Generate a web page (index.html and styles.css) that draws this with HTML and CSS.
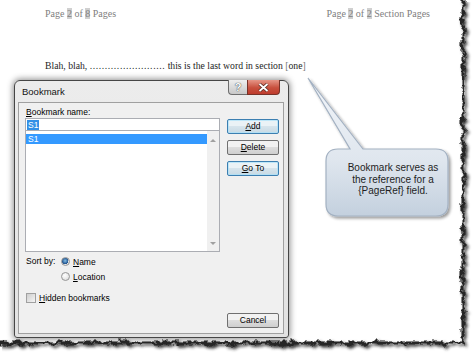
FILE: index.html
```html
<!DOCTYPE html>
<html>
  <head>
    <title>bookmark</title>
    <link rel="stylesheet" href="styles.css">
  </head>
  <body>
    <div class="page">

      <div class="header">
        <p class="header-text">Page <span class="fld">2</span> of <span class="fld">8</span> Pages</p>
        <p class="header-text">Page <span class="fld">2</span> of <span class="fld">2</span> Section Pages</p>
      </div>

      <p class="body-text">Blah, blah, <span class="leader">.........................</span> this is the last word in section <span class="mark">[</span>one<span class="mark">]</span></p>

      <div class="dialog">
        <div class="titlebar">
          <span class="title">Bookmark</span>
          <div class="caption-buttons">
            <span class="cap-btn help">?</span>
            <span class="cap-btn close">
              <svg width="11" height="9" viewBox="0 0 11 9">
                <path d="M1.5 1 L9.5 8 M9.5 1 L1.5 8" stroke="#5a2a22" stroke-width="3.4"/>
                <path d="M1.5 1 L9.5 8 M9.5 1 L1.5 8" stroke="#ffffff" stroke-width="1.8"/>
              </svg>
            </span>
          </div>
        </div>

        <div class="client">
          <div class="field-label"><u>B</u>ookmark name:</div>

          <div class="main">
            <div class="name-col">
              <div class="name-input"><span class="sel-text">S1</span></div>
              <div class="name-list">
                <div class="list-items">
                  <div class="item selected">S1</div>
                </div>
                <div class="scrollbar">
                  <span class="arrow up"></span>
                  <span class="arrow down"></span>
                </div>
              </div>
            </div>

            <div class="btn-col">
              <button class="btn default"><u>A</u>dd</button>
              <button class="btn"><u>D</u>elete</button>
              <button class="btn default"><u>G</u>o To</button>
            </div>
          </div>

          <div class="sort-row">
            <span class="sort-label">Sort by:</span>
            <div class="radios">
              <div class="option"><span class="radio checked"></span><span><u>N</u>ame</span></div>
              <div class="option"><span class="radio"></span><span><u>L</u>ocation</span></div>
            </div>
          </div>

          <div class="check-row"><span class="checkbox"></span><span><u>H</u>idden bookmarks</span></div>

          <div class="footer">
            <button class="btn">Cancel</button>
          </div>
        </div>
      </div>

      <div class="callout">
        <svg class="callout-shape" width="160" height="150" viewBox="0 0 160 150">
          <defs>
            <linearGradient id="calloutFill" x1="0" y1="0" x2="0" y2="1">
              <stop offset="0" stop-color="#f2f5f9"/>
              <stop offset="0.6" stop-color="#dfe6ee"/>
              <stop offset="1" stop-color="#c3d0de"/>
            </linearGradient>
            <filter id="calloutShadow" x="-20%" y="-20%" width="140%" height="140%">
              <feGaussianBlur in="SourceAlpha" stdDeviation="1.6"/>
              <feOffset dx="1.5" dy="2" result="s"/>
              <feComponentTransfer><feFuncA type="linear" slope="0.4"/></feComponentTransfer>
              <feMerge><feMergeNode/><feMergeNode in="SourceGraphic"/></feMerge>
            </filter>
          </defs>
          <path d="M38 77 L50 77 L8 6 L63 77 L136 77 Q148 77 148 89 L148 132 Q148 144 136 144 L38 144 Q26 144 26 132 L26 89 Q26 77 38 77 Z"
                fill="url(#calloutFill)" stroke="#a3b1c2" stroke-width="1.2" filter="url(#calloutShadow)"/>
        </svg>
        <p class="callout-text">Bookmark serves as<br>the reference for a<br>{PageRef} field.</p>
      </div>

      <svg class="torn-edge" width="474" height="355" viewBox="0 0 474 355">
        <defs>
          <filter id="torn" filterUnits="userSpaceOnUse" x="0" y="0" width="474" height="355">
            <feTurbulence type="fractalNoise" baseFrequency="0.14" numOctaves="4" seed="11" result="noise"/>
            <feDisplacementMap in="SourceGraphic" in2="noise" scale="8" xChannelSelector="R" yChannelSelector="G" result="d"/>
            <feGaussianBlur in="d" stdDeviation="1.5" result="b"/>
            <feOffset in="b" dx="2" dy="2" result="s"/>
            <feMerge><feMergeNode in="s"/><feMergeNode in="d"/></feMerge>
          </filter>
        </defs>
        <path d="M463 -10 L463 343 L-10 343" fill="none" stroke="#262626" stroke-width="3" filter="url(#torn)"/>
      </svg>

    </div>
  </body>
</html>
```

FILE: styles.css
```css
body {
  margin: 0;
  background-color: white;
}

.page {
  position: relative;
  width: 474px;
  height: 355px;
  overflow: hidden;
  padding: 8px 0 0 45px;
  box-sizing: border-box;
}

.header {
  display: flex;
  justify-content: space-between;
  width: 385px;
}

.header-text {
  margin: 0;
  font-family: "Liberation Serif", serif;
  font-size: 10px;
  line-height: 12px;
  color: rgb(128, 128, 128);
}

.fld {
  background-color: rgb(208, 208, 208);
}

.body-text {
  margin: 40px 0 0 0;
  font-family: "Liberation Serif", serif;
  font-size: 9.7px;
  line-height: 12px;
  color: rgb(30, 30, 30);
}

.leader {
  letter-spacing: 0.6px;
}

.mark {
  color: rgb(120, 120, 120);
}

/* dialog */

.dialog {
  position: absolute;
  left: 14px;
  top: 80px;
  width: 275px;
  height: 258px;
  box-sizing: border-box;
  border: 1px solid rgb(70, 70, 70);
  border-radius: 6px 6px 3px 3px;
  padding: 0 4px 3px 3px;
  background: linear-gradient(rgb(236, 236, 236), rgb(226, 226, 226));
  box-shadow: 0 0 6px 1px rgba(0, 0, 0, 0.45);
  font-family: "Liberation Sans", Arial, sans-serif;
  font-size: 8.5px;
  color: black;
}

.titlebar {
  display: flex;
  justify-content: space-between;
  height: 21px;
}

.title {
  font-size: 9.5px;
  line-height: 21px;
  padding-left: 4px;
  color: rgb(20, 20, 20);
}

.caption-buttons {
  display: flex;
  margin-top: -1px;
  margin-right: 4px;
}

.cap-btn {
  display: flex;
  justify-content: center;
  align-items: center;
  height: 15px;
  box-sizing: border-box;
  border: 1px solid rgb(110, 110, 110);
  border-top: none;
}

.help {
  width: 19px;
  border-radius: 0 0 0 4px;
  border-right: none;
  background: linear-gradient(rgb(238, 238, 238), rgb(200, 200, 200));
  color: white;
  font-size: 11px;
  font-weight: bold;
  text-shadow: 0 0 1px rgb(70, 70, 70), 0 0 1px rgb(70, 70, 70);
}

.close {
  width: 33px;
  border-radius: 0 0 4px 0;
  border-color: rgb(120, 50, 40);
  background: linear-gradient(rgb(230, 150, 135), rgb(200, 80, 62) 55%, rgb(190, 60, 45));
}

.client {
  height: 232px;
  box-sizing: border-box;
  border: 1px solid rgb(160, 160, 160);
  background-color: rgb(240, 240, 240);
  padding: 4px 4px 0 6px;
}

.field-label {
  height: 11px;
  line-height: 11px;
  padding-left: 1px;
}

.main {
  display: flex;
  gap: 7px;
}

.name-col {
  width: 195px;
}

.name-input {
  height: 13px;
  box-sizing: border-box;
  border: 1px solid rgb(171, 173, 179);
  background-color: white;
  padding: 1px 0 0 1px;
  line-height: 10px;
}

.sel-text {
  background-color: rgb(51, 143, 230);
  color: white;
  padding: 0 1px;
}

.name-list {
  display: flex;
  height: 121px;
  box-sizing: border-box;
  border: 1px solid rgb(171, 173, 179);
  border-top: none;
  background-color: white;
}

.list-items {
  flex: 1;
  padding-top: 3px;
}

.item {
  height: 10px;
  line-height: 10px;
  padding-left: 2px;
}

.selected {
  background-color: rgb(51, 153, 255);
  color: white;
}

.scrollbar {
  width: 12px;
  display: flex;
  flex-direction: column;
  justify-content: space-between;
  align-items: center;
  padding: 8px 0 6px 0;
  background-color: rgb(240, 240, 240);
}

.arrow {
  width: 0;
  height: 0;
  border-left: 3px solid transparent;
  border-right: 3px solid transparent;
}

.up {
  border-bottom: 3px solid rgb(160, 160, 160);
}

.down {
  border-top: 3px solid rgb(160, 160, 160);
}

.btn-col {
  display: flex;
  flex-direction: column;
  gap: 6px;
  padding-top: 1px;
}

.btn {
  width: 52px;
  height: 15px;
  padding: 0;
  box-sizing: border-box;
  border: 1px solid rgb(112, 112, 112);
  border-radius: 2px;
  background: linear-gradient(rgb(242, 242, 242) 45%, rgb(221, 221, 221) 50%, rgb(207, 207, 207));
  font-family: "Liberation Sans", Arial, sans-serif;
  font-size: 8.5px;
  line-height: 13px;
  color: black;
}

.default {
  border-color: rgb(60, 127, 177);
  background: linear-gradient(rgb(234, 242, 246) 45%, rgb(214, 228, 236) 50%, rgb(200, 218, 228));
  box-shadow: inset 0 0 0 1px rgba(170, 225, 250, 0.7);
}

.sort-row {
  display: flex;
  margin-top: 4px;
}

.sort-label {
  width: 35px;
  padding-left: 1px;
  line-height: 11px;
}

.radios {
  display: flex;
  flex-direction: column;
  gap: 4px;
}

.option {
  display: flex;
  align-items: center;
  gap: 3px;
  height: 11px;
}

.radio {
  width: 9px;
  height: 9px;
  box-sizing: border-box;
  border: 1px solid rgb(150, 150, 150);
  border-radius: 50%;
  background: radial-gradient(circle at 40% 35%, white, rgb(215, 215, 215));
}

.checked {
  background: radial-gradient(circle at 45% 40%, rgb(130, 190, 230) 0, rgb(30, 80, 140) 55%, rgb(230, 230, 230) 60%);
}

.check-row {
  display: flex;
  align-items: center;
  gap: 3px;
  height: 11px;
  margin-top: 10px;
  padding-left: 1px;
}

.checkbox {
  width: 10px;
  height: 10px;
  box-sizing: border-box;
  border: 1px solid rgb(160, 160, 160);
  background: linear-gradient(135deg, rgb(205, 205, 205), rgb(245, 245, 245));
}

.footer {
  display: flex;
  justify-content: flex-end;
  margin-top: 10px;
}

/* callout */

.callout {
  position: absolute;
  left: 300px;
  top: 72px;
  width: 160px;
  height: 150px;
}

.callout-shape {
  display: block;
}

.callout-text {
  position: absolute;
  left: 38px;
  top: 90px;
  width: 110px;
  margin: 0;
  font-family: "Liberation Sans", Arial, sans-serif;
  font-size: 10px;
  line-height: 11.5px;
  text-align: center;
  color: rgb(30, 30, 30);
}

.torn-edge {
  position: absolute;
  left: 0;
  top: 0;
  pointer-events: none;
}
```
